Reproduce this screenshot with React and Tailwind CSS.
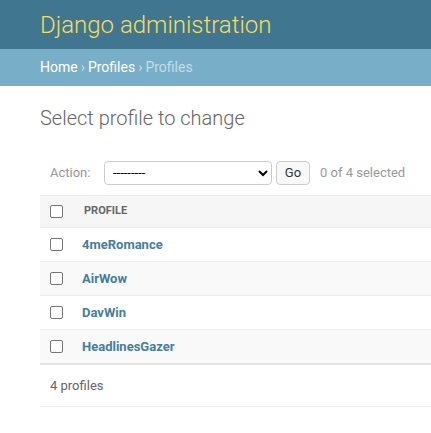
import { useState } from 'react'

const profiles = ['4meRomance', 'AirWow', 'DavWin', 'HeadlinesGazer']

function Box({ on, onClick }) {
  return (
    <span
      onClick={onClick}
      className={`block w-[13px] h-[13px] rounded-[2px] border border-[#767676] ${on ? 'bg-[#0075ff] border-[#0075ff]' : 'bg-white'}`}
    />
  )
}

export default function App() {
  const [checked, setChecked] = useState({})

  return (
    <div className="min-h-screen bg-white overflow-hidden font-['Roboto',sans-serif] text-[13px] text-[#333]">

      {/* ── header ── */}
      <div className="h-[49px] bg-[#417690] px-10 flex items-center">
        <div className="text-[24px] font-light text-[#f5dd5d] leading-none">Django administration</div>
      </div>

      {/* ── breadcrumbs ── */}
      <div className="h-[37px] bg-[#79aec8] px-10 flex items-center text-[14px] text-[#c4dce8]">
        <a className="text-white">Home</a>
        <span className="mx-[3px]">›</span>
        <a className="text-white">Profiles</a>
        <span className="mx-[3px]">›</span>
        <span>Profiles</span>
      </div>

      {/* ── content ── */}
      <div className="pt-5 pl-10">
        <h1 className="text-[20px] font-light leading-6 text-[#666] mb-5">Select profile to change</h1>

        {/* actions */}
        <div className="h-[45px] pl-[10px] flex items-center text-[#999] whitespace-nowrap">
          <span className="w-[54px]">Action:</span>
          <select className="w-[168px] h-[24px] border border-[#ccc] rounded bg-white text-black text-[13px] pl-1">
            <option>---------</option>
          </select>
          <button className="ml-1 w-[34px] h-[24px] border border-[#ccc] rounded bg-[#f8f8f8] text-[#333] text-[13px]">Go</button>
          <span className="ml-[10px]">0 of 4 selected</span>
        </div>

        {/* results */}
        <div className="border-b-2 border-[#e4e4e4]">
          <div className="h-[33px] bg-[#f6f6f6] border-t border-b border-[#eee] flex items-center pl-[10px]">
            <Box on={false} />
            <span className="ml-[21px] text-[11px] font-bold uppercase text-[#666]">Profile</span>
          </div>
          {profiles.map((p, i) => (
            <div
              key={p}
              className={`flex items-center pl-[10px] ${i < profiles.length - 1 ? 'h-[34px] border-b border-[#eee]' : 'h-[33px]'} ${i % 2 ? 'bg-[#f9f9f9]' : 'bg-white'}`}
            >
              <Box on={!!checked[p]} onClick={() => setChecked({ ...checked, [p]: !checked[p] })} />
              <a className="ml-[19px] font-bold text-[#447e9b]">{p}</a>
            </div>
          ))}
        </div>

        {/* paginator */}
        <div className="h-[42px] flex items-center pl-[10px] text-[#666] border-b border-[#eee]">4 profiles</div>
      </div>
    </div>
  )
}
